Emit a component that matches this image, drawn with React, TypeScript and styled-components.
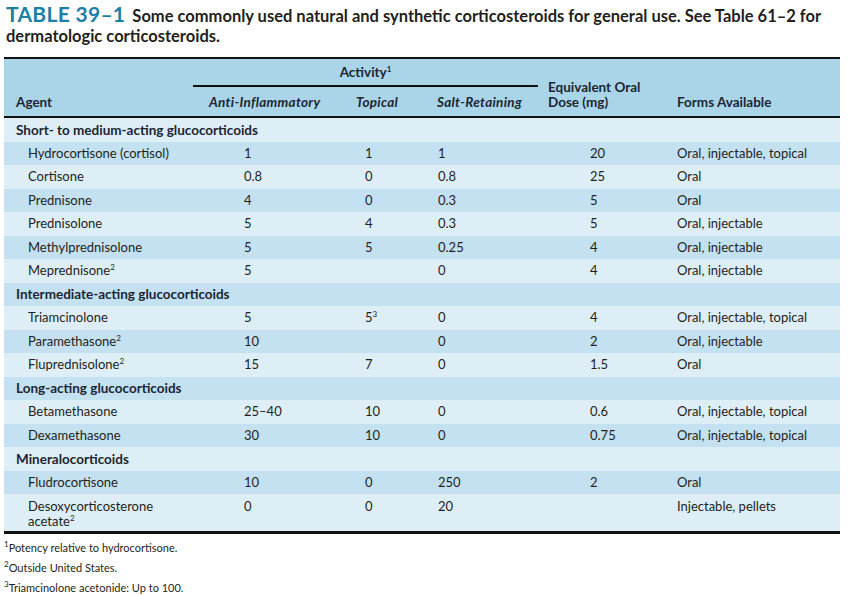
import React from "react";
import styled, { createGlobalStyle } from "styled-components";

const GlobalStyle = createGlobalStyle`
  body {
    margin: 0;
    background: #ffffff;
    font-family: Lato, "Open Sans", sans-serif;
    color: #231f20;
  }
`;

const Page = styled.div`
  width: 848px;
  padding: 5px 4px 0 4px;
  box-sizing: border-box;
`;

const Title = styled.h1`
  margin: 0 0 0 2px;
  font-size: 16.5px;
  letter-spacing: 0;
  line-height: 20px;
  font-weight: 700;
  color: #231f20;
  white-space: nowrap;
`;

const TableNo = styled.span`
  color: #1b7fa6;
  font-size: 21px;
  letter-spacing: 0.3px;
  line-height: 18px;
  margin-right: 3px;
`;

const Table = styled.div`
  width: 836px;
  margin-top: 11px;
  border-top: 2px solid #111;
  border-bottom: 3px solid #111;
  font-size: 13px;
`;

// columns: agent | anti-inflammatory | topical | salt-retaining | dose | forms
const COLS = "189px 157px 80px 108px 130px 172px";

const Head = styled.div`
  display: grid;
  grid-template-columns: ${COLS};
  grid-template-rows: 28px 29px;
  background: #aad4e8;
  border-bottom: 2px solid #111;
  font-weight: 700;
  font-size: 13.5px;
  color: #1c2633;
`;

const HeadCell = styled.div<{ $col: string; $row: string; $pad: number; $italic?: boolean }>`
  grid-column: ${(p) => p.$col};
  grid-row: ${(p) => p.$row};
  padding-left: ${(p) => p.$pad}px;
  align-self: end;
  padding-bottom: 6px;
  line-height: 15px;
  font-style: ${(p) => (p.$italic ? "italic" : "normal")};
  letter-spacing: ${(p) => (p.$italic ? "0.3px" : "0")};
`;

const ActivityCell = styled.div`
  grid-column: 2 / 5;
  grid-row: 1;
  border-bottom: 2px solid #111;
  text-align: center;
  line-height: 26px;
`;

const Row = styled.div<{ $alt: boolean; $tall?: boolean }>`
  display: grid;
  grid-template-columns: ${COLS};
  align-items: ${(p) => (p.$tall ? "start" : "center")};
  height: ${(p) => (p.$tall ? "37px" : "23.5px")};
  padding-top: ${(p) => (p.$tall ? "5px" : "0")};
  box-sizing: border-box;
  background: ${(p) => (p.$alt ? "#c3e1f1" : "#deeef7")};
`;

const Cell = styled.div<{ $pad: number }>`
  padding-left: ${(p) => p.$pad}px;
  line-height: 15px;
`;

const SectionCell = styled.div`
  grid-column: 1 / -1;
  padding-left: 12px;
  font-weight: 700;
  font-size: 13.5px;
  color: #1c2633;
`;

const Sup = styled.sup`
  font-size: 8px;
  line-height: 0;
  vertical-align: 5px;
`;

const Notes = styled.div`
  padding-top: 6px;
  font-size: 11px;
  display: flex;
  flex-direction: column;
  gap: 5px;
  line-height: 15px;
`;

const PADS = [24, 51, 15, 8, 52, 9];

type Item =
  | { kind: "section"; label: string }
  | { kind: "drug"; cells: React.ReactNode[]; tall?: boolean };

const data: Item[] = [
  { kind: "section", label: "Short- to medium-acting glucocorticoids" },
  { kind: "drug", cells: ["Hydrocortisone (cortisol)", "1", "1", "1", "20", "Oral, injectable, topical"] },
  { kind: "drug", cells: ["Cortisone", "0.8", "0", "0.8", "25", "Oral"] },
  { kind: "drug", cells: ["Prednisone", "4", "0", "0.3", "5", "Oral"] },
  { kind: "drug", cells: ["Prednisolone", "5", "4", "0.3", "5", "Oral, injectable"] },
  { kind: "drug", cells: ["Methylprednisolone", "5", "5", "0.25", "4", "Oral, injectable"] },
  { kind: "drug", cells: [<>Meprednisone<Sup>2</Sup></>, "5", "", "0", "4", "Oral, injectable"] },
  { kind: "section", label: "Intermediate-acting glucocorticoids" },
  { kind: "drug", cells: ["Triamcinolone", "5", <>5<Sup>3</Sup></>, "0", "4", "Oral, injectable, topical"] },
  { kind: "drug", cells: [<>Paramethasone<Sup>2</Sup></>, "10", "", "0", "2", "Oral, injectable"] },
  { kind: "drug", cells: [<>Fluprednisolone<Sup>2</Sup></>, "15", "7", "0", "1.5", "Oral"] },
  { kind: "section", label: "Long-acting glucocorticoids" },
  { kind: "drug", cells: ["Betamethasone", "25–40", "10", "0", "0.6", "Oral, injectable, topical"] },
  { kind: "drug", cells: ["Dexamethasone", "30", "10", "0", "0.75", "Oral, injectable, topical"] },
  { kind: "section", label: "Mineralocorticoids" },
  { kind: "drug", cells: ["Fludrocortisone", "10", "0", "250", "2", "Oral"] },
  {
    kind: "drug",
    tall: true,
    cells: [<>Desoxycorticosterone<br />acetate<Sup>2</Sup></>, "0", "0", "20", "", "Injectable, pellets"],
  },
];

export default function App() {
  return (
    <Page>
      <GlobalStyle />
      <Title>
        <TableNo>TABLE 39–1</TableNo>{" "}
        Some commonly used natural and synthetic corticosteroids for general use. See Table 61–2 for
        <br />
        dermatologic corticosteroids.
      </Title>

      <Table>
        <Head>
          <HeadCell $col="1" $row="1 / 3" $pad={12}>Agent</HeadCell>
          <ActivityCell>Activity<Sup>1</Sup></ActivityCell>
          <HeadCell $col="2" $row="2" $pad={16} $italic>Anti-Inflammatory</HeadCell>
          <HeadCell $col="3" $row="2" $pad={6} $italic>Topical</HeadCell>
          <HeadCell $col="4" $row="2" $pad={7} $italic>Salt-Retaining</HeadCell>
          <HeadCell $col="5" $row="1 / 3" $pad={10}>Equivalent Oral<br />Dose (mg)</HeadCell>
          <HeadCell $col="6" $row="1 / 3" $pad={9}>Forms Available</HeadCell>
        </Head>

        {data.map((item, i) =>
          item.kind === "section" ? (
            <Row key={i} $alt={i % 2 === 1}>
              <SectionCell>{item.label}</SectionCell>
            </Row>
          ) : (
            <Row key={i} $alt={i % 2 === 1} $tall={item.tall}>
              {item.cells.map((c, j) => (
                <Cell key={j} $pad={PADS[j]}>{c}</Cell>
              ))}
            </Row>
          )
        )}
      </Table>

      <Notes>
        <div><Sup>1</Sup>Potency relative to hydrocortisone.</div>
        <div><Sup>2</Sup>Outside United States.</div>
        <div><Sup>3</Sup>Triamcinolone acetonide: Up to 100.</div>
      </Notes>
    </Page>
  );
}
